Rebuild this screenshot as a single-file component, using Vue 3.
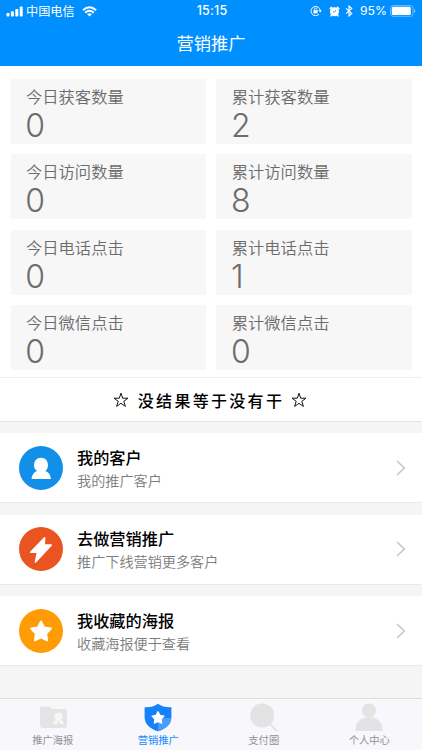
<template>
  <div class="page">
    <header class="top">
      <div class="status">
        <div class="status-left">
          <svg class="signal" width="18" height="11" viewBox="0 0 18 11" fill="#fff">
            <rect x="0.5" y="7" width="3" height="3.5" rx="0.8" />
            <rect x="4.9" y="5.2" width="3" height="5.3" rx="0.8" />
            <rect x="9.3" y="3" width="3" height="7.5" rx="0.8" />
            <rect x="13.7" y="0.5" width="3" height="10" rx="0.8" />
          </svg>
          <span class="carrier">中国电信</span>
          <svg width="15" height="11" viewBox="0 0 15 11" fill="none" stroke="#fff" stroke-width="1.9">
            <path d="M0.9 4.2Q7.5 -1.9 14.1 4.2" />
            <path d="M3.2 6.8Q7.5 2.8 11.8 6.8" />
            <path d="M7.5 10.6L5.1 8.2Q7.5 6.2 9.9 8.2Z" fill="#fff" stroke="none" />
          </svg>
        </div>
        <span class="time">15:15</span>
        <div class="status-right">
          <svg width="12" height="12" viewBox="0 0 12 12" fill="none" stroke="#fff">
            <path d="M9 9.2A4.6 4.6 0 1 1 10.2 5.5" stroke-width="1" />
            <path d="M8.4 5.3h3.5L10.2 7.5Z" fill="#fff" stroke="none" />
            <rect x="3.5" y="5.2" width="4.2" height="3.2" fill="#fff" stroke="none" />
            <path d="M4.4 5.5V4.3a1.2 1.2 0 0 1 2.4 0v1.2" stroke-width="0.8" />
          </svg>
          <svg class="alarm" width="11" height="11" viewBox="0 0 11 11">
            <circle cx="5.5" cy="5.7" r="4.5" fill="#fff" />
            <path d="M1.2 2.6L2.6 1.3M8.4 1.3l1.4 1.3M2.6 9l-.6.8M8.4 9l.6.8" stroke="#fff" stroke-width="1.6" stroke-linecap="round" />
            <path d="M7 3.9L5.5 6.2 3.9 5.3" fill="none" stroke="#008fff" stroke-width="0.8" />
          </svg>
          <svg class="bluetooth" width="8" height="12" viewBox="0 0 8 12" fill="none" stroke="#fff" stroke-width="1.1">
            <path d="M1 3.3l5.8 5.2L4 11V1l2.8 2.5L1 8.7" />
          </svg>
          <span class="percent">95%</span>
          <svg width="26" height="12" viewBox="0 0 26 12">
            <rect x="0.5" y="0.5" width="22.5" height="10.8" rx="2.4" fill="none" stroke="#7cc5ff" stroke-width="0.8" />
            <rect x="1.8" y="1.8" width="19" height="8.2" rx="1.2" fill="#fff" />
            <path d="M24 4v4q1.4-.5 1.4-2T24 4Z" fill="#7cc5ff" />
          </svg>
        </div>
      </div>
      <h1 class="title">营销推广</h1>
    </header>

    <section class="stats">
      <div v-for="item in stats" :key="item.label" class="stat">
        <div class="stat-label">{{ item.label }}</div>
        <div class="stat-value">{{ item.value }}</div>
      </div>
    </section>

    <div class="slogan">
      <svg class="slogan-star" viewBox="0 0 16 16"><path :d="starOutline" /></svg>
      <span class="slogan-text">没结果等于没有干</span>
      <svg class="slogan-star" viewBox="0 0 16 16"><path :d="starOutline" /></svg>
    </div>

    <main class="list">
      <div v-for="row in rows" :key="row.icon" class="row">
        <svg class="row-icon" :class="row.icon" viewBox="0 0 44 44">
          <circle cx="22" cy="22" r="22" />
          <path v-if="row.icon === 'customer'" fill="#fff" d="M22 11.7c4.3 0 7 3.2 7 7.2 0 2.7-1.1 4.7-2.6 6 3.3 1.1 5.4 4.3 5.6 8.100H12.600c.1-3.800 2.200-7 5.500-8.100-2-1.300-3.100-3.300-3.100-6 0-4 2.700-7.200 7-7.200Z" />
          <path v-else-if="row.icon === 'promote'" fill="#fff" stroke="#fff" stroke-width="1.6" stroke-linejoin="round" d="M25.6 10.700L11.700 25.200h6.800L16.500 35 32.300 18h-7.100Z" />
          <path v-else fill="#fff" stroke="#fff" stroke-width="2" stroke-linejoin="round" d="M22 12.500l3.100 6 6.800 1.100-4.800 4.900 1 6.900-6.100-3.100-6.100 3.100 1-6.900-4.800-4.900 6.800-1.100Z" />
        </svg>
        <div class="row-body">
          <div class="row-title">{{ row.title }}</div>
          <div class="row-desc">{{ row.desc }}</div>
        </div>
        <svg class="arrow" width="10" height="16" viewBox="0 0 10 16">
          <path d="M1 1l7.3 7L1 15" fill="none" stroke="#c4c4c4" stroke-width="1.5" />
        </svg>
      </div>
    </main>

    <nav class="tabs">
      <div v-for="tab in tabs" :key="tab.id" class="tab" :class="{ active: tab.id === current }" @click="current = tab.id">
        <svg class="tab-icon" viewBox="0 0 30 30">
          <template v-if="tab.id === 'poster'">
            <path d="M4 3.5h6.5q1.5 0 2.3 1.2L14 6h12q3 0 3 3V22q0 3-3 3H5q-3 0-3-3V5.500q0-2 2-2Z" fill="#e4e4e5" />
            <path d="M20.5 9.500a4 4 0 0 1 2.300 7.300q3 1.200 3 4.200h-10.600q0-3 3-4.200a4 4 0 0 1 2.300-7.300Z" fill="#f7f7fa" />
            <path d="M20.5 17l1.200 4h-2.400Z" fill="#dededf" />
          </template>
          <template v-else-if="tab.id === 'marketing'">
            <path d="M15 .8q5.500 4 13.400 3.500V14q0 10-13.400 14.300Q1.600 24 1.600 14V4.300Q9.500 4.800 15 .8Z" fill="#1681fa" />
            <path d="M15 15h13.300Q27.500 24.300 15 28.300Z" fill="#4a9dfb" />
            <path d="M15 8.800l1.900 3.600 4 .7-2.800 2.900.5 4.100-3.600-1.800-3.600 1.800.5-4.100-2.800-2.900 4-.7Z" fill="#fff" stroke="#fff" stroke-width="1.3" stroke-linejoin="round" />
          </template>
          <template v-else-if="tab.id === 'pay'">
            <path d="M21 21l7 7" stroke="#e4e4e5" stroke-width="1.8" />
            <circle cx="13.2" cy="12.5" r="12" fill="#e3e3e4" />
          </template>
          <template v-else>
            <circle cx="15" cy="7.5" r="7" fill="#e3e3e4" />
            <path d="M1.300 28Q1.800 14.200 15 14.200T28.700 28Z" fill="#e3e3e4" />
          </template>
        </svg>
        <span class="tab-name">{{ tab.name }}</span>
      </div>
    </nav>
  </div>
</template>

<script setup>
import { ref } from 'vue'

const current = ref('marketing')

const stats = [
  { label: '今日获客数量', value: 0 },
  { label: '累计获客数量', value: 2 },
  { label: '今日访问数量', value: 0 },
  { label: '累计访问数量', value: 8 },
  { label: '今日电话点击', value: 0 },
  { label: '累计电话点击', value: 1 },
  { label: '今日微信点击', value: 0 },
  { label: '累计微信点击', value: 0 }
]

const rows = [
  { icon: 'customer', title: '我的客户', desc: '我的推广客户' },
  { icon: 'promote', title: '去做营销推广', desc: '推广下线营销更多客户' },
  { icon: 'favorite', title: '我收藏的海报', desc: '收藏海报便于查看' }
]

const tabs = [
  { id: 'poster', name: '推广海报' },
  { id: 'marketing', name: '营销推广' },
  { id: 'pay', name: '支付圈' },
  { id: 'mine', name: '个人中心' }
]

const starOutline = 'M8 1.2l1.700 5h5.300l-4.200 3.100 1.600 5.100L8 11.300l-4.400 3.100 1.600-5.100L1 6.200h5.300Z'
</script>

<style>
body { background: #f5f5f5; }
</style>

<style scoped>
.page {
  height: 750px; overflow: hidden;
  display: flex; flex-direction: column;
  background: #f5f5f5;
  font-family: "Noto Sans CJK SC", sans-serif;
}
.top {
  flex: none; height: 66px;
  background: #008fff; color: #fff;
}
.status {
  height: 22px; padding: 0 6px;
  display: grid; grid-template-columns: 1fr auto 1fr; align-items: center;
}
.status svg { flex: none; }
.status-left, .status-right { display: flex; align-items: center; }
.status-right { justify-content: flex-end; }
.carrier { font-size: 12.2px; line-height: 20px; margin: 0 7px 0 2px; }
.time { font: 500 12.5px/20px Inter, sans-serif; letter-spacing: 0.2px; padding-left: 2px; }
.alarm { margin-left: 7px; }
.bluetooth { margin-left: 5px; }
.percent { font: 12.2px/20px Inter, sans-serif; margin: 0 3px 0 7px; }
.title {
  margin: 0; text-align: center;
  font-size: 17.3px; font-weight: 400; line-height: 42px;
}

.stats {
  flex: none; height: 311px; box-sizing: border-box;
  padding: 13px 10.5px 0;
  display: grid; grid-template-columns: 1fr 1fr; grid-auto-rows: 65px;
  gap: 10.35px 10.5px;
  background: #fff;
}
.stat { background: #f7f7f7; padding: 5px 15.5px 0; color: #6c6c6c; }
.stat-label { font-size: 16.3px; font-weight: 350; line-height: 25px; }
.stat-value { font: 300 32px/32px Inter, sans-serif; margin: 1px 0 0 -0.7px; }

.slogan {
  flex: none; height: 45px; box-sizing: border-box;
  padding-right: 2px;
  display: flex; align-items: center; justify-content: center;
  background: #fff;
  border-top: 1px solid #efefef; border-bottom: 1px solid #e5e5e5;
}
.slogan-star { width: 16px; height: 16px; fill: none; stroke: #111; stroke-width: 1; }
.slogan-text {
  font-size: 16px; font-weight: 500; letter-spacing: 2.3px;
  margin: 0 7px 0 9px; color: #000;
}

.list {
  flex: 1; padding-top: 11px;
  display: flex; flex-direction: column; gap: 11.5px;
}
.row {
  height: 70px; box-sizing: border-box;
  padding: 0 16px 0 19px;
  display: flex; align-items: center;
  background: #fff;
  border-bottom: 1px solid #e9e9e9;
}
.row-icon { flex: none; width: 44px; height: 44px; }
.customer { fill: #118fe9; }
.promote { fill: #e95420; }
.favorite { fill: #ff9b05; }
.row-body { flex: 1; margin-left: 14px; }
.row-title { font-size: 16.2px; font-weight: 500; line-height: 24px; color: #000; }
.row-desc { font-size: 14.15px; font-weight: 350; line-height: 22px; color: #7c7c7c; }

.tabs {
  flex: none; height: 52px; box-sizing: border-box;
  display: flex;
  background: #f7f7fc; border-top: 1px solid #dedee0;
}
.tab {
  flex: 1; padding-top: 4px;
  display: flex; flex-direction: column; align-items: center;
  color: #929295; cursor: pointer;
}
.tab.active { color: #168aff; }
.tab-icon { width: 30px; height: 30px; }
.tab-name { font-size: 10.3px; line-height: 14px; }
</style>
